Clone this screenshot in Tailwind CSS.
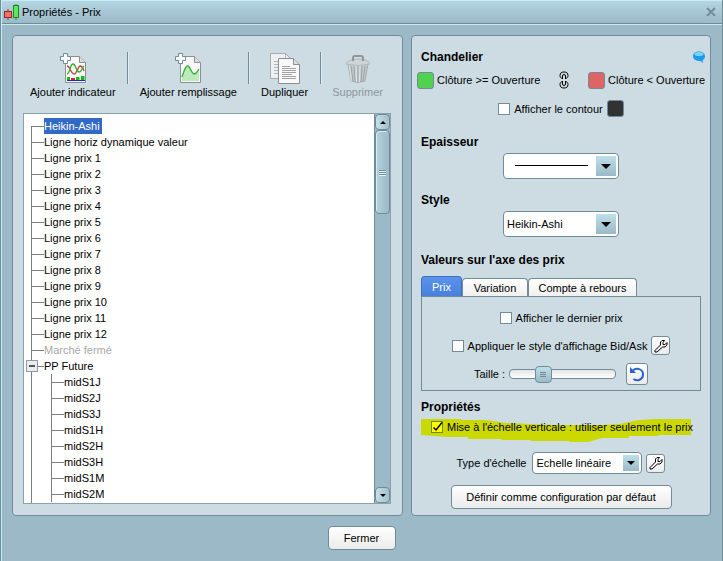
<!DOCTYPE html>
<html lang="fr">
<head>
  <meta charset="UTF-8" />
  <meta name="viewport" content="width=device-width, initial-scale=1.0" />
  <title>Propriétés - Prix</title>
  <script src="https://cdn.jsdelivr.net/npm/@tailwindcss/browser@4"></script>
</head>
<body class="min-h-screen flex flex-col bg-[#9bb9c6] border-l border-r border-[#708c99] shadow-[inset_1px_0_0_#c5eefb] font-['Liberation_Sans',Arial,sans-serif] text-[11px] leading-4 text-black">

  <!-- Barre de titre -->
  <header class="flex items-center gap-0.5 h-6 ml-px pl-0.5 pr-[6px] border-t border-t-[#c5eefb] border-b border-b-[#708c99] bg-linear-to-b from-[#b5d5e2] to-[#9bb9c6] shadow-[0_1px_0_#cfe6ef]">
    <svg class="w-4 h-4" viewBox="0 0 16 16" fill="none">
      <path d="M4 5v11" stroke="#7c3a3a" />
      <path d="M12 0v16" stroke="#1b8a1b" />
      <rect x=".5" y="7.500" width="7" height="6" fill="#f07070" stroke="#a02020" />
      <rect x="9.500" y="1.500" width="5" height="12" fill="#5fe65f" stroke="#1b8a1b" />
    </svg>
    <h1 class="flex-1">Propriétés - Prix</h1>
    <button aria-label="Fermer la fenêtre">
      <svg class="w-2.5 h-2.5" viewBox="0 0 10 10"><path d="M1 2l8 8M9 2l-8 8" stroke="#d5eaf2" /><path d="M1 1l8 8M9 1l-8 8" stroke="#708c99" stroke-width="2" /></svg>
    </button>
  </header>

  <main class="flex-1 flex gap-2 px-[11px] pt-[11px]">

    <!-- Liste des éléments -->
    <section class="flex-1 min-w-0 flex flex-col pl-2.5 pr-[11px] pt-4 pb-[11px] bg-[#cddce3] border border-[#708c99] rounded">
      <div class="flex justify-between items-start pl-[7px] pr-2 pb-[13px]">
        <button class="flex flex-col items-center">
          <svg class="w-8 h-8" viewBox="0 0 32 32" fill="none">
            <path d="M8.500 4.500h14l6 6v20h-20z" fill="#f8f8f8" stroke="#8a8f92" />
            <path d="M22.500 4.500v6h6" fill="#dcdcdc" stroke="#8a8f92" />
            <path d="M10 14c3 0 4 8 7 8s4-8 6-8 3 2 4 5" stroke="#c83c3c" stroke-width="1.300" />
            <path d="M10 22c3 0 3-10 6-10s3 8 6 8 3-5 5-6" stroke="#2fb02f" stroke-width="1.300" />
            <path d="M10 25h3v3h-3zM19 25h3.500v3H19zM24 24h3.500v4H24z" fill="#0fbf0f" />
            <path d="M14 26h4v2h-4z" fill="#d01f3f" />
            <path d="M10 28.500h18" stroke="#2222dd" />
            <path d="M6.500 1.500h4v3h3v4h-3v3h-4v-3h-3v-4h3z" fill="#fff" stroke="#708c99" />
          </svg>
          <span>Ajouter indicateur</span>
        </button>
        <span class="w-px h-8 bg-[#708c99] shadow-[1px_0_0_#dfeef5]"></span>
        <button class="flex flex-col items-center">
          <svg class="w-8 h-8" viewBox="0 0 32 32" fill="none">
            <path d="M8.500 4.500h14l6 6v20h-20z" fill="#f8f8f8" stroke="#8a8f92" />
            <path d="M22.500 4.500v6h6" fill="#dcdcdc" stroke="#8a8f92" />
            <path d="M10 24c2-6 4-11 6-10 2 0 3 7 6 8 2 0 3-3 5-5v12H10z" fill="#bdeabb" />
            <path d="M10 25c2-6 4-12 6-11 2 0 3 7 6 8 2 0 3-2 5-5" stroke="#35b135" stroke-width="1.300" />
            <path d="M6.500 1.500h4v3h3v4h-3v3h-4v-3h-3v-4h3z" fill="#fff" stroke="#708c99" />
          </svg>
          <span>Ajouter remplissage</span>
        </button>
        <span class="w-px h-8 bg-[#708c99] shadow-[1px_0_0_#dfeef5]"></span>
        <button class="flex flex-col items-center">
          <svg class="w-8 h-8" viewBox="0 0 32 32" fill="none">
            <path d="M1.500 1.500h15l5 5v20h-20z" fill="#eef1f2" stroke="#a5abae" />
            <path d="M16.500 1.500v5h5M5 9.500h6M5 12.500h6M5 15.500h6M5 18.500h6M5 21.500h6" stroke="#b0b5b8" />
            <path d="M9.500 6.500h15l6 6v19h-21z" fill="#f8f8f8" stroke="#8a8f92" />
            <path d="M24.500 6.500v6h6" fill="#dcdcdc" stroke="#8a8f92" />
            <path d="M13 14.500h8M13 16.500h14M13 18.500h14M13 20.500h14M13 22.500h10M13 24.500h14M13 26.500h14" stroke="#a2a2a2" />
          </svg>
          <span>Dupliquer</span>
        </button>
        <span class="w-px h-8 bg-[#708c99] shadow-[1px_0_0_#dfeef5]"></span>
        <button class="flex flex-col items-center text-[#8c979c]" disabled>
          <svg class="w-8 h-8" viewBox="0 0 32 32" fill="none">
            <path d="M6 12l3 17q7 3 14 0l3-17z" fill="#c3c9cc" stroke="#a3abaf" />
            <path d="M9 14l2 15M12 14l1 16M16 14v16M20 14l-1 16M23 14l-2 15" stroke="#9aa3a7" />
            <path d="M7.500 14l2 15M14 14l.5 16M18 14l-.5 16" stroke="#e4e8ea" />
            <path d="M4 12q0-4 12-5 12 1 12 5-12 3-24 0z" fill="#cfd4d6" stroke="#b4bbbe" />
            <path d="M11 9V6q0-2 2-2h6q2 0 2 2v3" stroke="#8f979b" stroke-width="2" />
          </svg>
          <span>Supprimer</span>
        </button>
      </div>

      <div class="flex-1 flex bg-white border border-[#8aa2ad] overflow-hidden">
        <ul class="flex-1 relative mt-1 ml-[7px] before:absolute before:left-0 before:top-2 before:bottom-0 before:w-px before:bg-[#808080]">
          <li class="flex items-center"><i class="w-[13px] h-px bg-[#808080]"></i><span class="bg-[#316ac5] text-white pr-0.5">Heikin-Ashi</span></li>
          <li class="flex items-center"><i class="w-[13px] h-px bg-[#808080]"></i>Ligne horiz dynamique valeur</li>
          <li class="flex items-center"><i class="w-[13px] h-px bg-[#808080]"></i>Ligne prix 1</li>
          <li class="flex items-center"><i class="w-[13px] h-px bg-[#808080]"></i>Ligne prix 2</li>
          <li class="flex items-center"><i class="w-[13px] h-px bg-[#808080]"></i>Ligne prix 3</li>
          <li class="flex items-center"><i class="w-[13px] h-px bg-[#808080]"></i>Ligne prix 4</li>
          <li class="flex items-center"><i class="w-[13px] h-px bg-[#808080]"></i>Ligne prix 5</li>
          <li class="flex items-center"><i class="w-[13px] h-px bg-[#808080]"></i>Ligne prix 6</li>
          <li class="flex items-center"><i class="w-[13px] h-px bg-[#808080]"></i>Ligne prix 7</li>
          <li class="flex items-center"><i class="w-[13px] h-px bg-[#808080]"></i>Ligne prix 8</li>
          <li class="flex items-center"><i class="w-[13px] h-px bg-[#808080]"></i>Ligne prix 9</li>
          <li class="flex items-center"><i class="w-[13px] h-px bg-[#808080]"></i>Ligne prix 10</li>
          <li class="flex items-center"><i class="w-[13px] h-px bg-[#808080]"></i>Ligne prix 11</li>
          <li class="flex items-center"><i class="w-[13px] h-px bg-[#808080]"></i>Ligne prix 12</li>
          <li class="flex items-center text-[#a8a8a8]"><i class="w-[13px] h-px bg-[#808080]"></i>Marché fermé</li>
          <li>
            <div class="relative flex items-center">
              <i class="w-[13px] h-px bg-[#808080]"></i>PP Future
              <button class="absolute -left-[5px] top-0.5 w-3 h-3 grid place-items-center bg-[#e9edef] border border-[#8f9ba1]" aria-label="Réduire PP Future"><i class="w-1.5 h-0.5 bg-[#555]"></i></button>
            </div>
            <ul class="ml-5 border-l border-[#808080]">
              <li class="flex items-center"><i class="w-3 h-px bg-[#808080]"></i>midS1J</li>
              <li class="flex items-center"><i class="w-3 h-px bg-[#808080]"></i>midS2J</li>
              <li class="flex items-center"><i class="w-3 h-px bg-[#808080]"></i>midS3J</li>
              <li class="flex items-center"><i class="w-3 h-px bg-[#808080]"></i>midS1H</li>
              <li class="flex items-center"><i class="w-3 h-px bg-[#808080]"></i>midS2H</li>
              <li class="flex items-center"><i class="w-3 h-px bg-[#808080]"></i>midS3H</li>
              <li class="flex items-center"><i class="w-3 h-px bg-[#808080]"></i>midS1M</li>
              <li class="flex items-center"><i class="w-3 h-px bg-[#808080]"></i>midS2M</li>
            </ul>
          </li>
        </ul>
        <!-- Barre de défilement -->
        <div class="w-4 flex flex-col bg-[#9bb9c6] border-l border-[#708c99]">
          <button class="h-4 grid place-items-center rounded-sm border border-[#708c99] bg-linear-to-r from-[#c3dfe9] to-[#a3c0cc]" aria-label="Monter">
            <svg class="w-1.5 h-[3px]" viewBox="0 0 6 3"><path d="M0 3l3-3 3 3z" /></svg>
          </button>
          <div class="h-[84px] flex flex-col items-center justify-center gap-px rounded-sm border border-[#708c99] bg-linear-to-r from-[#b5d3de] to-[#9bb9c6] shadow-[inset_1px_1px_0_#d5eaf2]">
            <i class="w-[7px] h-px bg-[#708c99] shadow-[0_1px_0_#e5f4fa]"></i>
            <i class="w-[7px] h-px bg-[#708c99] shadow-[0_1px_0_#e5f4fa]"></i>
            <i class="w-[7px] h-px bg-[#708c99] shadow-[0_1px_0_#e5f4fa]"></i>
          </div>
          <button class="mt-auto h-4 grid place-items-center rounded-sm border border-[#708c99] bg-linear-to-r from-[#c3dfe9] to-[#a3c0cc]" aria-label="Descendre">
            <svg class="w-1.5 h-[3px]" viewBox="0 0 6 3"><path d="M0 0l3 3 3-3z" /></svg>
          </button>
        </div>
      </div>
    </section>

    <!-- Réglages -->
    <section class="w-[300px] flex flex-col px-[9px] pt-[13px] pb-1.5 bg-[#cddce3] border border-[#708c99] rounded">
      <div class="flex justify-between items-center">
        <h2 class="font-bold text-xs leading-4">Chandelier</h2>
        <button class="-mr-1" aria-label="Aide">
          <svg class="w-3 h-3" viewBox="0 0 12 12"><path d="M6 .5c3.500 0 6 1.800 6 4.700 0 2-1 3.300-2.400 4l.4 2.800-2.800-2C3 10 0 8 0 5.200 0 2.300 2.500.5 6 .5z" fill="#1c9cf0" /><ellipse cx="6" cy="3" rx="4.500" ry="2" fill="#7fd0fb" /></svg>
        </button>
      </div>
      <div class="flex items-center justify-between mt-1.5 -mx-1">
        <label class="flex items-center gap-[3px]"><button class="w-[17px] h-[17px] rounded-[3px] border border-[#708c99] bg-[#50d250]"></button>Clôture &gt;= Ouverture</label>
        <svg class="w-2.5 h-[18px]" viewBox="0 0 10 18" fill="none">
          <path d="M3.500 7.500C1.500 7 1 6 1 4.500 1 2 2.500 1 5 1s4 1 4 3.500C9 6 8.500 7 6.500 7.500M3.500 8V5q0-1.500 1.500-1.500T6.500 5v3" stroke="#000" />
          <path d="M3.500 10.500C1.500 11 1 12 1 13.500 1 16 2.500 17 5 17s4-1 4-3.500c0-1.500-.5-2.500-2.500-3M3.500 10v3q0 1.500 1.500 1.500T6.500 13v-3" stroke="#000" />
        </svg>
        <label class="flex items-center gap-[3px]"><button class="w-[17px] h-[17px] rounded-[3px] border border-[#708c99] bg-[#e06464]"></button>Clôture &lt; Ouverture</label>
      </div>
      <div class="flex items-center justify-center gap-1 mt-[11px]">
        <label class="flex items-center gap-1"><input type="checkbox" class="appearance-none w-3 h-3 bg-white border border-[#708c99]" />Afficher le contour</label>
        <button class="w-[17px] h-[17px] rounded-[3px] border border-[#708c99] bg-[#323232]" aria-label="Couleur du contour"></button>
      </div>

      <h2 class="font-bold text-xs leading-4 mt-[17px]"><label for="epaisseur">Epaisseur</label></h2>
      <div class="relative self-center w-[116px] mt-[3px]">
        <select id="epaisseur" class="appearance-none block w-full h-[26px] bg-white border border-[#708c99] rounded text-transparent"><option>1</option></select>
        <i class="absolute left-3 top-3 w-[73px] h-px bg-black pointer-events-none"></i>
        <span class="absolute right-[3px] top-[3px] w-5 h-5 grid place-items-center bg-linear-to-b from-[#bfdfeb] to-[#9bb9c6] pointer-events-none"><svg class="w-2.5 h-[5px]" viewBox="0 0 10 5"><path d="M0 0h10L5 5z" /></svg></span>
      </div>

      <h2 class="font-bold text-xs leading-4 mt-[13px]"><label for="style">Style</label></h2>
      <div class="relative self-center w-[116px] mt-[3px]">
        <select id="style" class="appearance-none block w-full h-[26px] pl-[3px] bg-white border border-[#708c99] rounded"><option>Heikin-Ashi</option></select>
        <span class="absolute right-[3px] top-[3px] w-5 h-5 grid place-items-center bg-linear-to-b from-[#bfdfeb] to-[#9bb9c6] pointer-events-none"><svg class="w-2.5 h-[5px]" viewBox="0 0 10 5"><path d="M0 0h10L5 5z" /></svg></span>
      </div>

      <h2 class="font-bold text-xs leading-4 mt-[15px]">Valeurs sur l'axe des prix</h2>
      <div class="flex items-end mt-2">
        <button class="h-5 w-[41px] rounded-t bg-linear-to-b from-[#5a94ec] to-[#4880dc] border border-b-0 border-[#3c70c4] text-white">Prix</button>
        <button class="h-[18px] w-[66px] rounded-t bg-linear-to-b from-white to-[#f0f0f0] border border-b-0 border-[#708c99]">Variation</button>
        <button class="h-[18px] w-[109px] rounded-t bg-linear-to-b from-white to-[#f0f0f0] border border-b-0 border-[#708c99]">Compte à rebours</button>
      </div>
      <div class="flex flex-col items-center border border-[#708c99] pt-[13px] pb-[5px]">
        <label class="flex items-center gap-1"><input type="checkbox" class="appearance-none w-3 h-3 bg-white border border-[#708c99]" />Afficher le dernier prix</label>
        <div class="flex items-center gap-1 mt-2.5">
          <label class="flex items-center gap-1"><input type="checkbox" class="appearance-none w-3 h-3 bg-white border border-[#708c99]" />Appliquer le style d'affichage Bid/Ask</label>
          <button class="w-[19px] h-[19px] grid place-items-center rounded-[3px] border border-[#708c99] bg-linear-to-b from-white to-[#ebebeb]" aria-label="Configurer Bid/Ask">
            <svg class="w-3.5 h-3.5" viewBox="0 0 14 14" fill="none"><path d="M10.500 1.500H8L6.500 3v3L1 11.500V13h2l5.500-5H11l2-2V3.500L11 5.500H9v-2z" stroke="#000" /></svg>
          </button>
        </div>
        <div class="flex items-center mt-2">
          <label for="taille">Taille :</label>
          <input id="taille" type="range" min="0" max="100" value="28" class="appearance-none w-[107px] h-[10px] ml-1 mr-2.5 bg-linear-to-b from-[#e4e4e4] to-white border border-[#708c99] rounded [&::-webkit-slider-thumb]:appearance-none [&::-webkit-slider-thumb]:w-[17px] [&::-webkit-slider-thumb]:h-[17px] [&::-webkit-slider-thumb]:rounded [&::-webkit-slider-thumb]:border [&::-webkit-slider-thumb]:border-[#708c99] [&::-webkit-slider-thumb]:bg-[linear-gradient(#708c99_1px,transparent_1px,transparent_2px,#708c99_2px,#708c99_3px,transparent_3px,transparent_4px,#708c99_4px),linear-gradient(#bfdfeb,#9bb9c6)] [&::-webkit-slider-thumb]:bg-[length:6px_5px,100%_100%] [&::-webkit-slider-thumb]:bg-[position:center,center] [&::-webkit-slider-thumb]:bg-no-repeat" />
          <button class="w-[22px] h-[22px] grid place-items-center rounded-[3px] border border-[#708c99] bg-linear-to-b from-white to-[#ebebeb]" aria-label="Réinitialiser">
            <svg class="w-4 h-4" viewBox="0 0 16 16" fill="none"><path d="M4 4.500C7 1.500 14 2.500 14 8.500c0 5-5.500 7.500-9.500 4.500" stroke="#2a62d0" stroke-width="2" /><path d="M1 1v6h6z" fill="#2a62d0" /></svg>
          </button>
        </div>
      </div>

      <h2 class="font-bold text-xs leading-4 mt-2">Propriétés</h2>
      <div class="relative mt-1 h-6">
        <svg class="absolute inset-0 w-[270px] h-6" viewBox="0 0 270 24" preserveAspectRatio="none"><path d="M0 0h40v1h25l20 3 50 2 45 0 18-1 20-4 17-1h35v16h-32v1h-30v2h-27l-14 4h-19v-1h-38v-1h-30v-1h-33v-2h-20l-27-2H0z" fill="#ccd900" /></svg>
        <label class="relative flex items-center gap-1 pl-2.5">
          <span class="grid place-items-center">
            <input type="checkbox" checked class="[grid-area:1/1] appearance-none w-3 h-3 bg-[#ffff00] border border-[#6f8c00]" />
            <svg class="[grid-area:1/1] w-3 h-3 pointer-events-none" viewBox="0 0 12 12" fill="none"><path d="M2.500 6.500L5 9l6-7.500" stroke="#000" stroke-width="1.500" /></svg>
          </span>Mise à l'échelle verticale : utiliser seulement le prix
        </label>
      </div>

      <div class="flex items-center justify-center mt-[9px]">
        <label for="echelle">Type d'échelle</label>
        <div class="relative w-[110px] ml-1.5 mr-1">
          <select id="echelle" class="appearance-none block w-full h-[22px] pl-[3px] bg-white border border-[#708c99] rounded"><option>Echelle linéaire</option></select>
          <span class="absolute right-[3px] top-[3px] w-4 h-4 grid place-items-center bg-linear-to-b from-[#bfdfeb] to-[#9bb9c6] pointer-events-none"><svg class="w-2 h-1" viewBox="0 0 8 4"><path d="M0 0h8L4 4z" /></svg></span>
        </div>
        <button class="w-[19px] h-[19px] grid place-items-center rounded-[3px] border border-[#708c99] bg-linear-to-b from-white to-[#ebebeb]" aria-label="Configurer l'échelle">
          <svg class="w-3.5 h-3.5" viewBox="0 0 14 14" fill="none"><path d="M10.500 1.500H8L6.500 3v3L1 11.500V13h2l5.500-5H11l2-2V3.500L11 5.500H9v-2z" stroke="#000" /></svg>
        </button>
      </div>
      <button class="self-center w-[221px] h-6 mt-[11px] rounded border border-[#708c99] bg-linear-to-b from-white to-[#ebebeb]">Définir comme configuration par défaut</button>
    </section>
  </main>

  <footer class="flex justify-center pt-2.5 pb-[11px]">
    <button class="w-[68px] h-6 rounded border border-[#708c99] bg-linear-to-b from-white to-[#ebebeb]">Fermer</button>
  </footer>

</body>
</html>
